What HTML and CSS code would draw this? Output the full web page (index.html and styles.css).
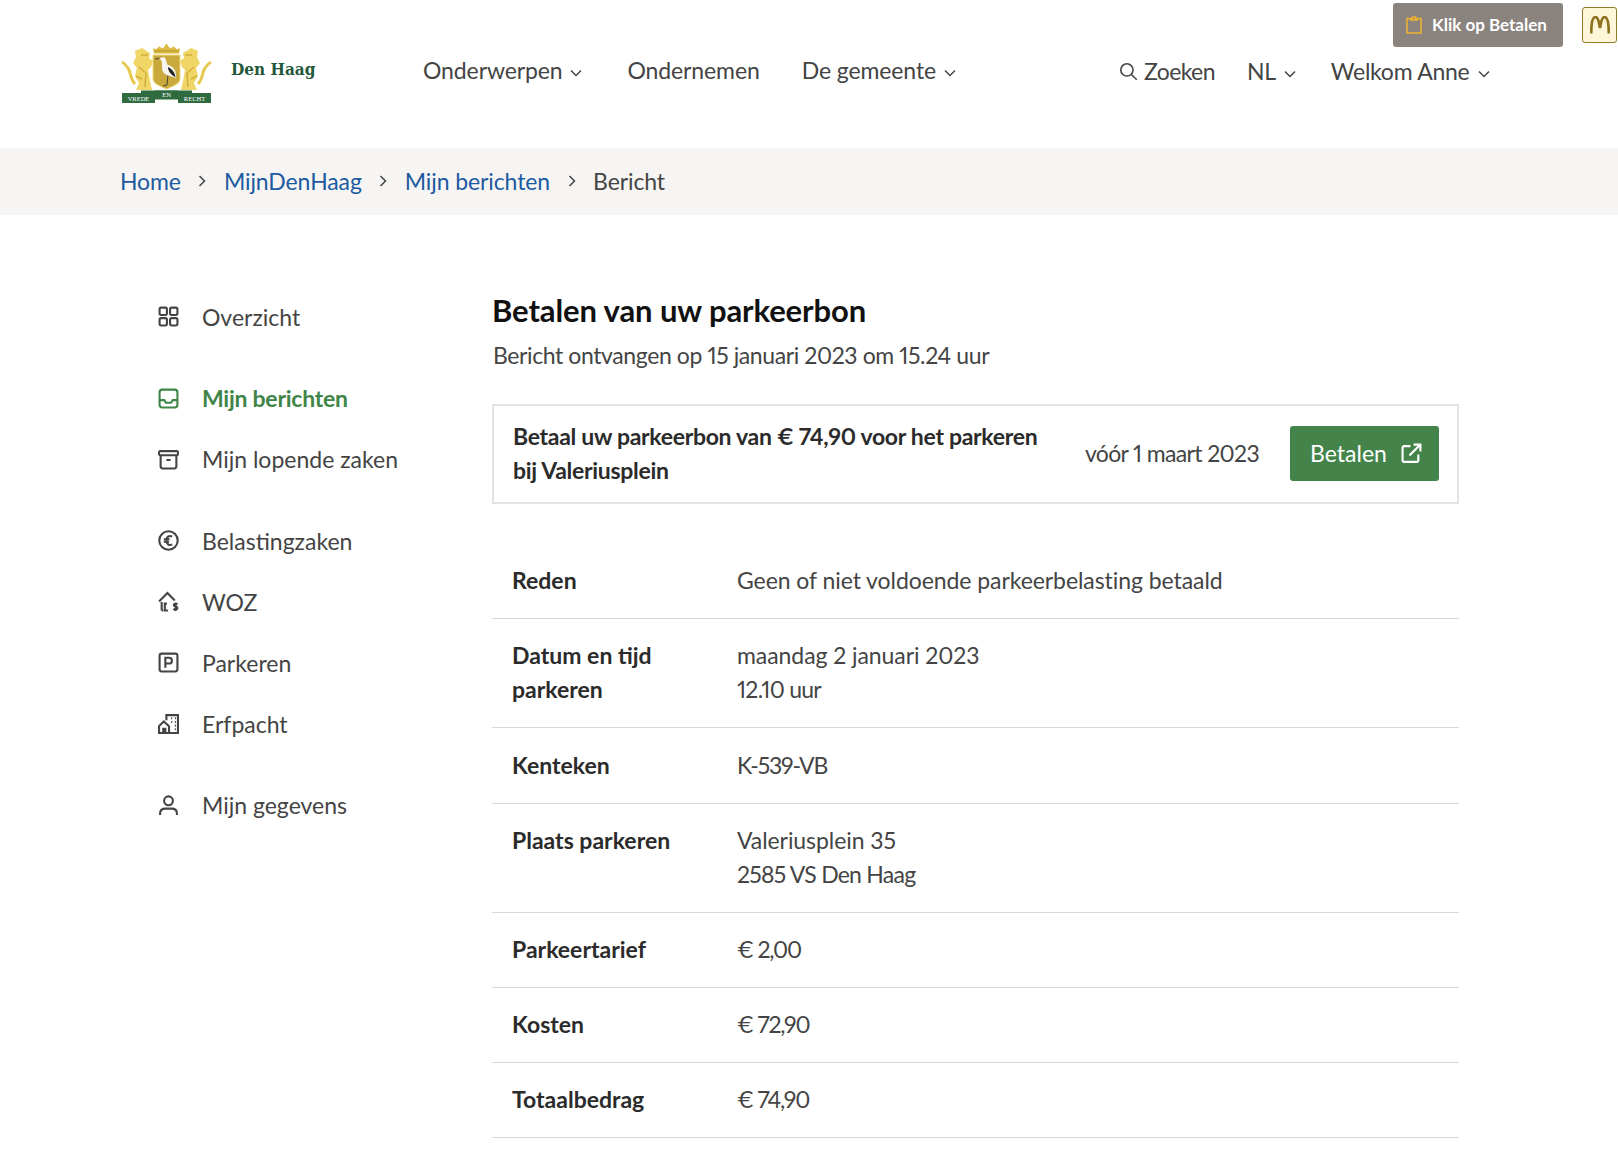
FILE: index.html
```html
<!DOCTYPE html>
<html lang="nl">
<head>
	<meta charset="utf-8">
	<title>Bericht</title>
	<link rel="stylesheet" href="styles.css">
</head>
<body>
	<div class="pay-hint">
		<div class="pay-tip">
			<svg class="ico-clip" viewBox="0 0 16 18"><path d="M3.500 2.500H1v14.500h14V2.500h-2.500M4.500 4V2.500H6.500V1h3v1.500h2V4z"/></svg>
			Klik op Betalen
		</div>
		<div class="pay-m">
			<svg viewBox="0 0 20 18"><path d="M1.200 17.500C1.200 8 2.500 1 5.500 1c2.500 0 3.800 6 4.500 11 .7-5 2-11 4.500-11 3 0 4.300 7 4.300 16.500"/></svg>
		</div>
	</div>

	<header class="top">
		<a class="logo">
			<svg class="crest" viewBox="0 0 91 60">
				<defs>
					<g id="lion">
						<path class="lion-tail" d="M14 41C9 36 10 29 7 25 5 22 3 20 1 19"/>
						<path class="lion-body" d="M14 8L21 5 29 10 28 15 32 18 30 24 27 27 29 38 31 47H15L18 40 14 33 16 25 12 20 15 14Z"/>
						<path class="lion-shade" d="M18 24L25 30 24 44M15 33L21 36M20 12L27 12"/>
					</g>
				</defs>
				<!-- crown -->
				<path class="gold" d="M32 5l3 1.500 3-3 4 2 3.500-5 3.500 5 4-2 3 3 3-1.500-1 5.500H33z"/>
				<path class="crown-line" d="M33 8h25"/>
				<use href="#lion"/>
				<use href="#lion" transform="translate(91 0) scale(-1 1)"/>
				<!-- shield -->
				<path class="shield" d="M32 12H59V36C59 41 50 44 45.500 46 41 44 32 41 32 36Z"/>
				<path class="stork-leg" d="M47 32L46 42 42 43M34 16L40 15"/>
				<path class="stork" d="M38 15L43 14C46 16 45 21 47 22 52 23 56 28 55 35 50 33 45 33 42 29 40 25 42 20 40 17Z"/>
				<path class="stork-wing" d="M47 24C51 26 54 30 54.500 34 50 32 47 28 47 24Z"/>
				<!-- banners -->
				<rect class="banner" x="20" y="47.500" width="51" height="3"/>
				<rect class="banner" x="34" y="47.500" width="23" height="9"/>
				<rect class="banner" x="1" y="50" width="33" height="10"/>
				<rect class="banner" x="57" y="50" width="33" height="10"/>
				<text class="motto" x="17.500" y="57.500" text-anchor="middle">VREDE</text>
				<text class="motto" x="45.500" y="54" text-anchor="middle">EN</text>
				<text class="motto" x="73.500" y="57.500" text-anchor="middle">RECHT</text>
			</svg>
			<span class="logo-name">Den Haag</span>
		</a>

		<nav class="mainnav">
			<a>Onderwerpen <svg class="chev" viewBox="0 0 12 8"><path d="M1 1.500l5 5 5-5"/></svg></a>
			<a>Ondernemen</a>
			<a>De gemeente <svg class="chev" viewBox="0 0 12 8"><path d="M1 1.500l5 5 5-5"/></svg></a>
		</nav>

		<div class="usernav">
			<a class="search"><svg class="ico-search" viewBox="0 0 18 18"><circle cx="7.500" cy="7.500" r="5.800"/><path d="M11.800 11.800l5 5"/></svg>Zoeken</a>
			<a>NL <svg class="chev" viewBox="0 0 12 8"><path d="M1 1.500l5 5 5-5"/></svg></a>
			<a>Welkom Anne <svg class="chev" viewBox="0 0 12 8"><path d="M1 1.500l5 5 5-5"/></svg></a>
		</div>
	</header>

	<div class="crumbs">
		<a>Home</a>
		<svg class="sep" viewBox="0 0 8 12"><path d="M1.500 1l5 5-5 5"/></svg>
		<a>MijnDenHaag</a>
		<svg class="sep" viewBox="0 0 8 12"><path d="M1.500 1l5 5-5 5"/></svg>
		<a>Mijn berichten</a>
		<svg class="sep" viewBox="0 0 8 12"><path d="M1.500 1l5 5-5 5"/></svg>
		<span>Bericht</span>
	</div>

	<div class="page">
		<aside class="side">
			<ul class="side-group">
				<li><svg viewBox="0 0 20 20"><rect x="1.500" y="1.500" width="7" height="7" rx="1.500"/><rect x="11.500" y="1.500" width="7" height="7" rx="1.500"/><rect x="1.500" y="11.500" width="7" height="7" rx="1.500"/><rect x="11.500" y="11.500" width="7" height="7" rx="1.500"/></svg>Overzicht</li>
			</ul>
			<ul class="side-group">
				<li class="active"><svg viewBox="0 0 20 20"><rect x="1.500" y="1.500" width="17" height="17" rx="2.500"/><path d="M1.500 11.500h4.500l1.500 2.500h5l1.500-2.500h4.500"/></svg>Mijn berichten</li>
				<li><svg viewBox="0 0 20 20"><rect x="1" y="2" width="18" height="4" rx="1.200"/><path d="M2.500 6v10.500a2 2 0 0 0 2 2h11a2 2 0 0 0 2-2V6M8 10.500h4"/></svg>Mijn lopende zaken</li>
			</ul>
			<ul class="side-group">
				<li><svg viewBox="0 0 20 20"><circle cx="10" cy="10" r="8.800"/><path d="M13.500 6.300c-2.800-1.500-5.500 0-5.500 3.700s2.700 5.200 5.500 3.700M5.500 8.800h5.500M5.500 11.200h5"/></svg>Belastingzaken</li>
				<li><svg viewBox="0 0 20 20"><path d="M1 10l8-8 7 7M3.500 18.500v-8M3.500 18.500h1.500M8.500 12h-2v6.500h3"/><path d="M18.500 12.800c-1-.8-3.500-.8-3.500.7s3.500 1 3.500 2.800-2.800 1.500-3.800.7M16.800 11v8"/></svg>WOZ</li>
				<li><svg viewBox="0 0 20 20"><rect x="1.500" y="1.500" width="17" height="17" rx="2"/><path d="M7 15V5.500h3.500a2.700 2.700 0 0 1 0 5.500H7"/></svg>Parkeren</li>
				<li><svg viewBox="0 0 20 20"><path d="M8 7V2h11v17H1v-6.500L5.500 8l5 4.500V19M5 19v-4h2v4"/><path d="M12.500 5h1M16 5h1M12.500 8.500h1M16 8.500h1M16 12h1M16 15.500h1"/></svg>Erfpacht</li>
			</ul>
			<ul class="side-group">
				<li><svg viewBox="0 0 20 20"><circle cx="10" cy="5.500" r="4.200"/><path d="M2 19v-1.500c0-3 2-4.500 5-4.500h6c3 0 5 1.500 5 4.500V19"/></svg>Mijn gegevens</li>
			</ul>
		</aside>

		<main class="content">
			<h1>Betalen van uw parkeerbon</h1>
			<p class="received">Bericht ontvangen op 15 januari 2023 om 15.24 uur</p>

			<div class="paybox">
				<p class="paytext">Betaal uw parkeerbon van € 74,90 voor het parkeren bij Valeriusplein</p>
				<span class="paydate">vóór 1 maart 2023</span>
				<a class="btn">Betalen <svg viewBox="0 0 20 20"><path d="M9 3H3a1.500 1.500 0 0 0-1.500 1.500v12A1.500 1.500 0 0 0 3 18h12a1.500 1.500 0 0 0 1.500-1.500V11M8 12L18.500 1.500M12 1.500h6.500V8"/></svg></a>
			</div>

			<dl class="details">
				<div class="row"><dt>Reden</dt><dd>Geen of niet voldoende parkeerbelasting betaald</dd></div>
				<div class="row"><dt>Datum en tijd parkeren</dt><dd>maandag 2 januari 2023<br><span class="num-mid">12.10 uur</span></dd></div>
				<div class="row"><dt>Kenteken</dt><dd class="nums">K-539-VB</dd></div>
				<div class="row"><dt>Plaats parkeren</dt><dd>Valeriusplein 35<br><span class="num-mid">2585 VS Den Haag</span></dd></div>
				<div class="row"><dt>Parkeertarief</dt><dd class="nums">€ 2,00</dd></div>
				<div class="row"><dt>Kosten</dt><dd class="nums">€ 72,90</dd></div>
				<div class="row"><dt>Totaalbedrag</dt><dd class="nums">€ 74,90</dd></div>
			</dl>
		</main>
	</div>
</body>
</html>
```

FILE: styles.css
```css
* {
	box-sizing: border-box;
}

html, body {
	margin: 0;
	padding: 0;
}

body {
	position: relative;
	font-family: "Lato", "Open Sans", sans-serif;
	font-size: 23px;
	line-height: 34px;
	font-variant-numeric: proportional-nums;
	color: #444444;
	background: #ffffff;
	height: 1170px;
	overflow: hidden;
}

a {
	color: inherit;
	text-decoration: none;
}

/* floating hint in the corner */
.pay-hint {
	position: absolute;
	top: 3px;
	left: 1393px;
	display: flex;
	align-items: flex-start;
	gap: 19px;
}

.pay-tip {
	width: 170px;
	height: 44px;
	padding-left: 13px;
	display: flex;
	align-items: center;
	gap: 10px;
	background: #8a837e;
	border-radius: 3px;
	color: #ffffff;
	font-size: 17px;
	font-weight: 700;
	line-height: 44px;
}

.ico-clip {
	width: 16px;
	height: 18px;
	fill: none;
	stroke: #eeb52e;
	stroke-width: 1.500;
}

.pay-m {
	width: 35px;
	height: 36px;
	margin-top: 4px;
	background: #fdf6d8;
	border: 1px solid #8f7a2a;
	border-radius: 3px;
	display: flex;
	align-items: center;
	justify-content: center;
}

.pay-m svg {
	width: 20px;
	height: 18px;
	fill: none;
	stroke: #8f7420;
	stroke-width: 2.800;
}

/* header */
.top {
	height: 148px;
	padding-left: 121px;
	display: flex;
	position: relative;
}

.logo {
	width: 302px;
	display: flex;
	align-items: flex-start;
	padding-top: 43px;
}

.crest {
	width: 91px;
	height: 60px;
	flex: none;
}

.gold {
	fill: #dcb93f;
}

.crown-line {
	fill: none;
	stroke: #a98f2e;
	stroke-width: 0.800;
}

.lion-tail {
	fill: none;
	stroke: #e8c94f;
	stroke-width: 3;
}

.lion-body {
	fill: #efd667;
}

.lion-shade {
	fill: none;
	stroke: #d4ae3c;
	stroke-width: 1.500;
}

.shield {
	fill: #c9a83c;
	stroke: #f2dc78;
	stroke-width: 1;
}

.stork {
	fill: #f6f5f1;
}

.stork-wing {
	fill: #26241f;
}

.stork-leg {
	fill: none;
	stroke: #4a4336;
	stroke-width: 1;
}

.banner {
	fill: #2f6b3f;
}

.motto {
	fill: #ffffff;
	font-family: "Liberation Serif", serif;
	font-size: 6.500px;
}

.logo-name {
	margin: 9px 0 0 19px;
	font-family: "DejaVu Serif", "Liberation Serif", serif;
	font-stretch: condensed;
	font-size: 17px;
	line-height: 34px;
	font-weight: 700;
	color: #24583a;
}

.mainnav {
	display: flex;
	gap: 42px;
	padding-top: 53px;
	letter-spacing: -0.1px;
}

.mainnav .chev {
	margin: 0 3px 0 2px;
}

.usernav {
	position: absolute;
	left: 1119px;
	top: 54px;
	display: flex;
	gap: 32px;
	letter-spacing: -0.25px;
}

.usernav .chev {
	margin: 0 3px 0 3px;
}

.search {
	display: flex;
	align-items: center;
	letter-spacing: -0.6px;
}

.ico-search {
	width: 19px;
	height: 19px;
	margin-right: 6px;
	fill: none;
	stroke: #444444;
	stroke-width: 1.500;
}

.chev {
	width: 12px;
	height: 8px;
	vertical-align: 2px;
	fill: none;
	stroke: #444444;
	stroke-width: 1.500;
}

/* breadcrumb */
.crumbs {
	height: 67px;
	padding-left: 120px;
	padding-bottom: 2px;
	background: #f6f5f3;
	display: flex;
	align-items: center;
	gap: 17.500px;
	letter-spacing: -0.1px;
}

.crumbs a {
	color: #1d5aa0;
}

.sep {
	width: 8px;
	height: 12px;
	fill: none;
	stroke: #444444;
	stroke-width: 1.500;
}

/* main columns */
.page {
	display: flex;
	padding: 71px 159px 0 158px;
}

.side {
	width: 334px;
	flex: none;
}

.side-group {
	list-style: none;
	margin: 0 0 20.600px;
	padding: 0;
}

.side-group li {
	height: 61px;
	display: flex;
	align-items: center;
	gap: 23px;
}

.side-group svg {
	width: 21px;
	height: 21px;
	flex: none;
	fill: none;
	stroke: #444444;
	stroke-width: 2;
}

.side-group .active {
	color: #3f8548;
	font-weight: 700;
	letter-spacing: -0.25px;
}

.side-group .active svg {
	stroke: #3f8548;
}

.content {
	flex: 1;
	padding-top: 4px;
}

h1 {
	margin: 0;
	font-size: 31px;
	line-height: 40px;
	font-weight: 700;
	letter-spacing: -0.1px;
	color: #111111;
}

.received {
	margin: 8px 0 0 1px;
	letter-spacing: -0.4px;
}

.paybox {
	margin-top: 32px;
	height: 100px;
	padding: 0 18px 2px 19px;
	border: 2px solid #e2e2e2;
	display: flex;
	align-items: center;
}

.paytext {
	width: 540px;
	margin: 0;
	font-weight: 700;
	letter-spacing: -0.3px;
	color: #2b2b2b;
}

.paydate {
	margin-left: auto;
	letter-spacing: -0.65px;
}

.btn {
	width: 149px;
	height: 55px;
	margin-left: 31px;
	padding-left: 3px;
	background: #44844b;
	border-radius: 3px;
	color: #ffffff;
	display: flex;
	align-items: center;
	justify-content: center;
	gap: 14px;
}

.btn svg {
	width: 21px;
	height: 21px;
	fill: none;
	stroke: #ffffff;
	stroke-width: 2;
}

.details {
	margin: 40px 0 0;
}

.row {
	display: flex;
	padding: 19.200px 20px 21px;
	border-bottom: 1px solid #d8d8d8;
}

.row dt {
	width: 225px;
	font-weight: 700;
	color: #2b2b2b;
}

.row dd {
	margin: 0;
	letter-spacing: -0.07px;
}

.row .nums {
	letter-spacing: -1.200px;
}

.row .num-mid {
	letter-spacing: -0.750px;
}
```
